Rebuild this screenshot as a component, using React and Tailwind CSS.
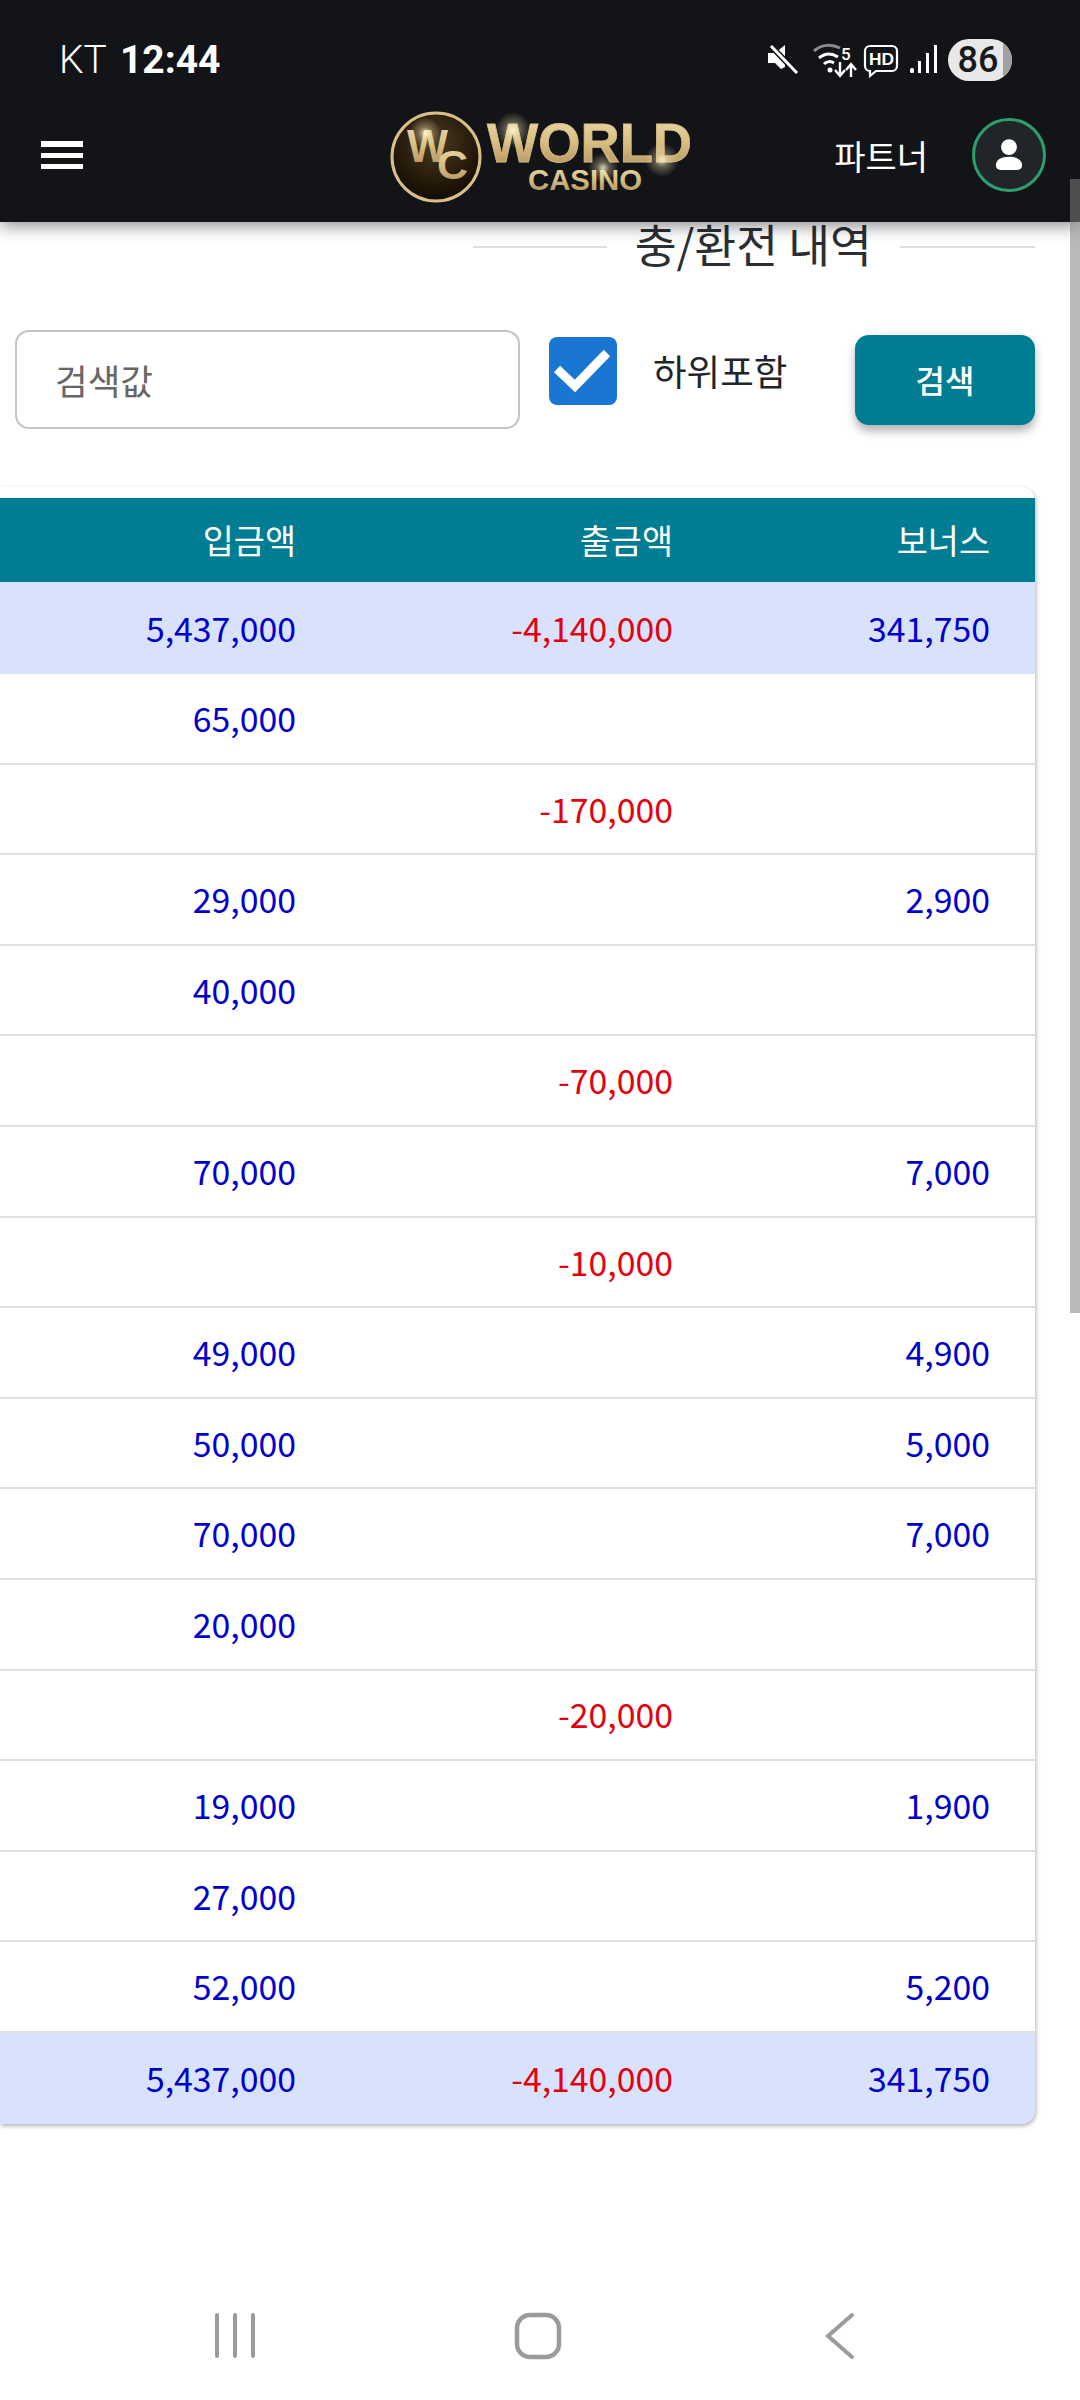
const rows = [
  ["65,000", "", ""],
  ["", "-170,000", ""],
  ["29,000", "", "2,900"],
  ["40,000", "", ""],
  ["", "-70,000", ""],
  ["70,000", "", "7,000"],
  ["", "-10,000", ""],
  ["49,000", "", "4,900"],
  ["50,000", "", "5,000"],
  ["70,000", "", "7,000"],
  ["20,000", "", ""],
  ["", "-20,000", ""],
  ["19,000", "", "1,900"],
  ["27,000", "", ""],
  ["52,000", "", "5,200"],
];

function Cells({ a, b, c }) {
  return (
    <>
      <div className="pr-[45px] text-right text-[#0000cd]">{a}</div>
      <div className="pr-[45px] text-right text-[#e5000f]">{b}</div>
      <div className="pr-[45px] text-right text-[#0000cd]">{c}</div>
    </>
  );
}

const gridCols = "grid grid-cols-[341px_377px_317px] items-center";

function Logo() {
  return (
    <svg width="320" height="110" viewBox="0 0 320 110" className="block">
      <defs>
        <linearGradient id="gold" x1="0" y1="0" x2="0" y2="1">
          <stop offset="0" stopColor="#efdcae" />
          <stop offset="0.5" stopColor="#d8bd82" />
          <stop offset="1" stopColor="#a98a55" />
        </linearGradient>
        <radialGradient id="ball" cx="0.5" cy="0.35" r="0.65">
          <stop offset="0" stopColor="#4a3a22" />
          <stop offset="0.7" stopColor="#241809" />
          <stop offset="1" stopColor="#120c05" />
        </radialGradient>
        <radialGradient id="glow">
          <stop offset="0" stopColor="#fffbe0" stopOpacity="0.85" />
          <stop offset="0.4" stopColor="#f5e6ae" stopOpacity="0.35" />
          <stop offset="1" stopColor="#f5e6ae" stopOpacity="0" />
        </radialGradient>
      </defs>
      <circle cx="46" cy="55" r="44" fill="url(#ball)" stroke="#d9bf85" strokeWidth="3" />
      <text x="17" y="60" fontFamily="'Liberation Sans', sans-serif" fontWeight="700" fontSize="47" fill="url(#gold)" textLength="41" lengthAdjust="spacingAndGlyphs">W</text>
      <text x="47" y="77" fontFamily="'Liberation Sans', sans-serif" fontWeight="700" fontSize="41" fill="url(#gold)" textLength="31" lengthAdjust="spacingAndGlyphs">C</text>
      <text x="97" y="60" fontFamily="'Liberation Sans', sans-serif" fontWeight="700" fontSize="55" fill="url(#gold)" stroke="#d8bd82" strokeWidth="0.8" textLength="205" lengthAdjust="spacingAndGlyphs">WORLD</text>
      <text x="138" y="88" fontFamily="'Liberation Sans', sans-serif" fontWeight="700" fontSize="30" fill="url(#gold)" textLength="114" lengthAdjust="spacingAndGlyphs">CASINO</text>
      <circle cx="35" cy="31" r="16" fill="url(#glow)" />
      <circle cx="123" cy="28" r="18" fill="url(#glow)" />
      <circle cx="272" cy="58" r="17" fill="url(#glow)" />
      <circle cx="213" cy="66" r="15" fill="url(#glow)" />
    </svg>
  );
}

function StatusIcons() {
  return (
    <svg width="175" height="40" viewBox="765 42 175 40" className="block">
      {/* mute */}
      <path d="M768 55h7l10-8v22l-4 2-6-6h-7z" fill="#fff" />
      <path d="M770 47l27 28" stroke="#121418" strokeWidth="6" />
      <path d="M771 48l26 27" stroke="#fff" strokeWidth="3" />
      {/* wifi */}
      <path d="M814 53c8-7 18-7 26-3" stroke="#8a8a8a" strokeWidth="3" fill="none" />
      <path d="M819 60c6-5 13-5 19-1" stroke="#fff" strokeWidth="3" fill="none" />
      <path d="M824 66c3-3 7-3 10-1" stroke="#fff" strokeWidth="3" fill="none" />
      <circle cx="830" cy="72" r="2.5" fill="#fff" />
      <text x="841" y="62" fontFamily="Roboto, sans-serif" fontWeight="500" fontSize="17" fill="#fff">5</text>
      <path d="M840 64v14M835 72l5 6 5-6M851 79V67M846 72l5-6 5 6" stroke="#fff" strokeWidth="2.4" fill="none" />
      {/* HD */}
      <path d="M870 48h22a5 5 0 0 1 5 5v15a5 5 0 0 1-5 5h-16l-6 5v-5a5 5 0 0 1-5-5V53a5 5 0 0 1 5-5z" stroke="#fff" strokeWidth="2.2" fill="none" />
      <text x="869" y="67" fontFamily="'Liberation Sans', sans-serif" fontWeight="700" fontSize="17" fill="#fff" textLength="25" lengthAdjust="spacingAndGlyphs">HD</text>
      {/* signal */}
      <rect x="910" y="70" width="4" height="5" rx="1.5" fill="#fff" />
      <rect x="918" y="63" width="3" height="12" fill="#fff" />
      <rect x="926" y="55" width="3" height="20" fill="#fff" />
      <rect x="934" y="47" width="3" height="28" fill="#fff" />
    </svg>
  );
}

export default function App() {
  return (
    <div className="relative flex h-[2400px] w-[1080px] flex-col overflow-hidden bg-white font-['Noto_Sans_CJK_KR','Noto_Sans',sans-serif] text-[#212529]">
      <header className="z-10 flex h-[222px] flex-col bg-[#121418] shadow-[0_4px_16px_rgba(0,0,0,0.45)]">
        <div className="flex h-[96px] items-center pl-[59px] pr-[68px] pt-[24px] font-['Roboto',sans-serif] text-white">
          <span className="text-[39px] font-light">KT</span>
          <span className="ml-[13px] text-[39px] font-bold">12:44</span>
          <div className="ml-auto flex items-center gap-2">
            <StatusIcons />
            <div className="relative flex h-[42px] w-[64px] items-center justify-center overflow-hidden rounded-full bg-[#e8e8e8] text-[36px] font-medium text-[#17191c]">
              <span className="z-10 -ml-[4px]">86</span>
              <div className="absolute right-0 top-0 h-full w-[9px] bg-[#a0a0a0]" />
            </div>
          </div>
        </div>
        <div className="relative flex flex-1 items-center pb-[8px] pl-[41px] pr-[34px]">
          <div className="flex w-[42px] flex-col gap-[6px]">
            <div className="h-[6px] bg-white" />
            <div className="h-[5px] bg-white" />
            <div className="h-[5px] bg-white" />
          </div>
          <div className="absolute left-[390px] top-[6px]">
            <Logo />
          </div>
          <span className="ml-auto text-[34px] font-normal text-white">파트너</span>
          <div className="ml-[44px] flex h-[74px] w-[74px] items-center justify-center rounded-full border-[3px] border-[#2f9e6e] bg-[#212529]">
            <svg width="28" height="32" viewBox="0 0 30 34">
              <circle cx="15" cy="8.5" r="8.5" fill="#fff" />
              <path d="M1 28c0-6 6-9 14-9s14 3 14 9c0 3-2 5-5 5H6c-3 0-5-2-5-5z" fill="#fff" />
            </svg>
          </div>
        </div>
      </header>

      <main className="flex flex-1 flex-col pr-[45px]">
        <div className="flex h-[50px] items-center justify-end">
          <div className="h-[2px] w-[134px] bg-[#dedede]" />
          <h1 className="mx-[28px] -mt-[6px] text-[45.5px] font-normal leading-none text-[#2b2f33]">충/환전 내역</h1>
          <div className="h-[2px] w-[135px] bg-[#dedede]" />
        </div>

        <div className="mt-[58px] flex h-[99px] items-start pl-[15px]">
          <input
            placeholder="검색값"
            className="h-[99px] w-[505px] rounded-[14px] border-2 border-[#c4c4c4] bg-white pl-[38px] text-[35.5px] text-[#333] outline-none placeholder:text-[#666]"
            readOnly
          />
          <div className="ml-[29px] mt-[7px] flex h-[68px] w-[68px] items-center justify-center rounded-[8px] bg-[#1976d2]">
            <svg width="68" height="68" viewBox="0 0 68 68">
              <path d="M8 32l18 17L58 16" stroke="#fff" strokeWidth="9" fill="none" />
            </svg>
          </div>
          <span className="ml-[36px] mt-[14px] text-[36.5px] leading-[54px] text-[#212529]">하위포함</span>
          <button className="ml-auto mt-[5px] h-[90px] w-[180px] rounded-[14px] bg-[#007d92] pb-[3px] text-[32px] font-medium text-white shadow-[0_6px_10px_rgba(0,0,0,0.3)]">
            검색
          </button>
        </div>

        <div className="mt-[58px] rounded-r-[14px] bg-white pt-[11px] text-[33.8px] shadow-[1px_2px_4px_rgba(0,0,0,0.3)]">
          <div className={`${gridCols} h-[84px] bg-[#007d92] text-white`}>
            <div className="pr-[45px] text-right">입금액</div>
            <div className="pr-[45px] text-right">출금액</div>
            <div className="pr-[45px] text-right">보너스</div>
          </div>
          <div className={`${gridCols} h-[92px] bg-[#d8e2fc]`}>
            <Cells a="5,437,000" b="-4,140,000" c="341,750" />
          </div>
          {rows.map((r, i) => (
            <div key={i} className={`${gridCols} h-[90.6px] border-b-2 border-[#e0e0e0]`}>
              <Cells a={r[0]} b={r[1]} c={r[2]} />
            </div>
          ))}
          <div className={`${gridCols} h-[91px] rounded-br-[14px] bg-[#d8e2fc]`}>
            <Cells a="5,437,000" b="-4,140,000" c="341,750" />
          </div>
        </div>
      </main>

      <nav className="flex h-[120px] items-start pl-[215px] pt-[32px]">
        <svg width="660" height="48" viewBox="215 2310 660 48" className="block">
          <g stroke="#9b9b9b" fill="none" strokeLinecap="round">
            <path d="M217 2313v41M235 2313v41M253 2313v41" strokeWidth="4" />
            <rect x="517" y="2313" width="42" height="42" rx="13" strokeWidth="4.5" />
            <path d="M852 2313l-24 21 24 21" strokeWidth="4" />
          </g>
        </svg>
      </nav>

      <div className="absolute right-0 top-[179px] z-20 h-[1134px] w-[10px] bg-[rgba(128,128,128,0.55)]" />
    </div>
  );
}
